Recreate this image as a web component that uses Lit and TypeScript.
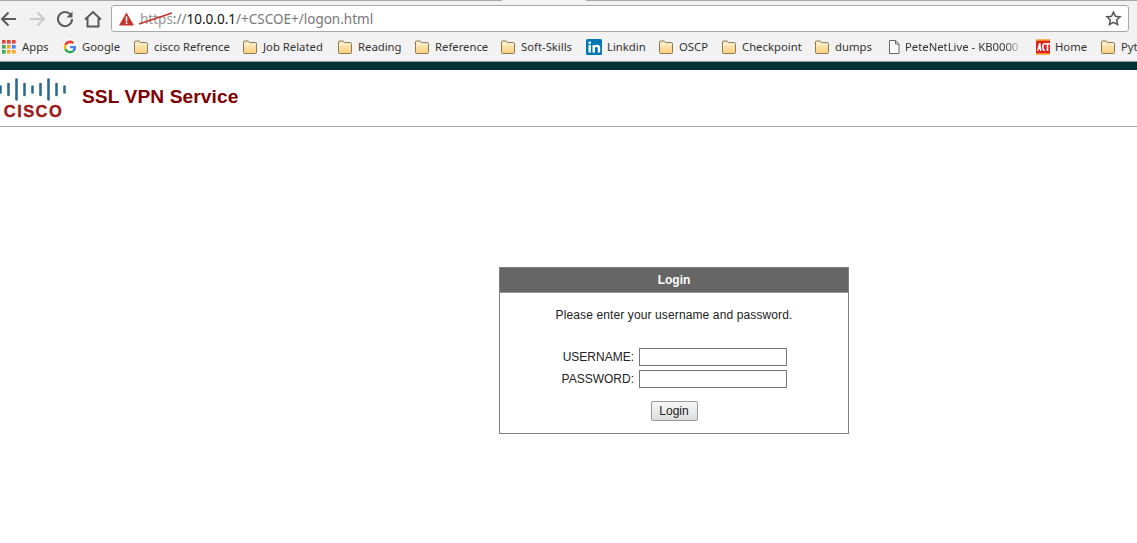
import { LitElement, html, css, svg } from "lit";
import { customElement } from "lit/decorators.js";

const folder = html`<svg class="ic" viewBox="0 0 16 16"><defs><linearGradient id="fg" x1="0" y1="0" x2="0" y2="1"><stop offset="0" stop-color="#fdeec8"/><stop offset="1" stop-color="#fbcf7e"/></linearGradient></defs><path d="M1.500 13.500V3a1 1 0 0 1 1-1h3.600l1.400 1.600h6a1 1 0 0 1 1 1v8.900a1 1 0 0 1-1 1h-11a1 1 0 0 1-1-1z" fill="url(#fg)" stroke="#8a7a55" stroke-width="1"/><path d="M2 5.500h12" stroke="#fff6df" stroke-width="1"/></svg>`;

const google = html`<svg class="ic goog" viewBox="-6 -6 60 60"><circle cx="24" cy="24" r="30" fill="#fff"/><path fill="#EA4335" d="M24 9.500c3.500 0 6.700 1.300 9.100 3.500l6.800-6.800C35.900 2.400 30.400 0 24 0 14.600 0 6.500 5.400 2.600 13.200l7.900 6.100C12.400 13.700 17.700 9.500 24 9.500z"/><path fill="#4285F4" d="M46.900 24.500c0-1.600-.1-3.100-.4-4.500H24v9h12.900c-.6 3-2.200 5.500-4.700 7.200l7.700 6c4.500-4.200 7-10.300 7-17.700z"/><path fill="#FBBC05" d="M10.500 28.700c-.5-1.400-.8-3-.8-4.700s.3-3.200.8-4.700l-7.900-6.100C.9 16.500 0 20.100 0 24s.9 7.500 2.600 10.800l7.900-6.100z"/><path fill="#34A853" d="M24 48c6.500 0 11.900-2.100 15.900-5.800l-7.700-6c-2.200 1.500-4.900 2.300-8.200 2.300-6.300 0-11.600-4.200-13.500-9.900l-7.900 6.100C6.500 42.600 14.600 48 24 48z"/></svg>`;

const linkedin = html`<svg class="ic" viewBox="0 0 16 16"><rect width="16" height="16" rx="1.500" fill="#0077b5"/><rect x="2.500" y="6" width="2.400" height="7.500" fill="#fff"/><circle cx="3.700" cy="3.800" r="1.400" fill="#fff"/><path d="M6.500 6h2.300v1.100c.5-.8 1.400-1.300 2.500-1.300 2 0 2.900 1.200 2.900 3.300v4.400h-2.400V9.500c0-1-.4-1.600-1.300-1.600s-1.600.6-1.600 1.700v3.900H6.500z" fill="#fff"/></svg>`;

const page = html`<svg class="ic" viewBox="0 0 16 16"><path d="M3.500 1.500h6l3.500 3.500v9.500H3.500z M9.500 1.500V5H13" fill="#fff" stroke="#666" stroke-width="1"/></svg>`;

const act = html`<svg class="ic" viewBox="0 0 16 16"><rect x="1" y="1" width="14" height="14" fill="#e02020"/><path d="M1 1h14M1 15h14" stroke="#f5a623" stroke-width="1.500"/><path d="M2 12l2-8h1.500l1 8H5l-.1-1.700H3.800L3.400 12z M7 8c0-3 1-4 3-4v1.500c-1 0-1.400.8-1.400 2.500s.4 2.500 1.400 2.500V12c-2 0-3-1-3-4z M10 4h5v1.500h-1.700V12h-1.600V5.500H10z" fill="#fff"/></svg>`;

const apps = html`<svg class="ic apps" viewBox="0 0 14 14">${[
  ["#e8453c", "#e8453c", "#e8453c"],
  ["#3aa757", "#f5a623", "#4285f4"],
  ["#3aa757", "#f5a623", "#f5a623"],
].flatMap((row, y) =>
  row.map((c, x) => svg`<rect x=${x * 5} y=${y * 5} width="3.600" height="3.600" fill=${c}/>`)
)}</svg>`;

interface Mark { label: string; icon: unknown; width: number; iconGap?: number; fade?: boolean; }

const marks: Mark[] = [
  { label: "Apps", icon: apps, width: 61, iconGap: 6 },
  { label: "Google", icon: google, width: 70, iconGap: 4 },
  { label: "cisco Refrence", icon: folder, width: 109 },
  { label: "Job Related", icon: folder, width: 95 },
  { label: "Reading", icon: folder, width: 77 },
  { label: "Reference", icon: folder, width: 86 },
  { label: "Soft-Skills", icon: folder, width: 86 },
  { label: "Linkdin", icon: linkedin, width: 72 },
  { label: "OSCP", icon: folder, width: 63 },
  { label: "Checkpoint", icon: folder, width: 93 },
  { label: "dumps", icon: folder, width: 72 },
  { label: "PeteNetLive - KB0000", icon: page, width: 149, iconGap: 3, fade: true },
  { label: "Home", icon: act, width: 65, iconGap: 4 },
  { label: "Pyt", icon: folder, width: 37 },
];

const ciscoBars = [7, 12, 21, 12, 7, 12, 21, 12, 7];

@customElement("app-root")
export class AppRoot extends LitElement {
  static styles = css`
    :host { display: block; width: 1137px; height: 543px; overflow: hidden; background: #fff; font-family: "Liberation Sans", Arial, sans-serif; color: #222; }
    .tabline { display: flex; height: 1px; background: #a8a8a8; }
    .tabgap { width: 84px; margin-left: 502px; background: #f2f2f2; }
    .toolbar { display: flex; align-items: flex-start; gap: 10px; height: 33px; box-sizing: border-box; background: #f2f2f2; padding: 4px 8px 0 0; }
    .nav { display: flex; width: 18px; height: 27px; align-items: center; justify-content: center; flex: none; }
    .nav.home { margin-right: -1px; }
    .nav svg { width: 20px; height: 20px; display: block; flex: none; }
    .omni { flex: 1; display: flex; align-items: center; height: 27px; box-sizing: border-box; border: 1px solid #a9a9a9; border-radius: 3px; background: #fff; padding: 0 6px 0 7px; font-family: "Noto Sans", "Open Sans", sans-serif; font-size: 13.500px; color: #777; white-space: nowrap; }
    .warn { width: 15px; height: 14px; flex: none; margin-right: 6px; }
    .scheme { position: relative; color: #999; }
    .strike { position: absolute; left: -1px; top: 0; width: 36px; height: 18px; overflow: visible; }
    .host { color: #111; }
    .path { flex: 1; }
    .star { width: 17px; height: 17px; flex: none; }
    .marks { display: flex; align-items: center; height: 28px; background: #f2f2f2; border-bottom: 1px solid #999; box-sizing: border-box; padding: 0 0 1px 2px; overflow: hidden; white-space: nowrap; font-family: "Noto Sans", "Open Sans", sans-serif; font-size: 11.300px; color: #333; }
    .mark { display: flex; align-items: center; flex: none; overflow: hidden; }
    .mark span { margin-bottom: 2px; }
    .ic { width: 16px; height: 16px; flex: none; display: block; }
    .apps { width: 14px; height: 14px; }
    .goog { margin-left: -1px; }
    .fade { width: 118px; overflow: hidden; -webkit-mask-image: linear-gradient(90deg, #000 85%, transparent); mask-image: linear-gradient(90deg, #000 85%, transparent); }
    .band { height: 8px; background: #003333; }
    .head { display: flex; align-items: center; height: 57px; box-sizing: border-box; border-bottom: 1px solid #aaa; gap: 16px; }
    .logo { width: 66px; height: 40px; flex: none; }
    .title { font-size: 19.200px; font-weight: bold; color: #800000; margin-top: -2px; letter-spacing: 0.070px; }
    .stage { padding: 140px 0 0 499px; }
    .box { width: 350px; height: 167px; box-sizing: border-box; border: 1px solid #808080; font-size: 12px; color: #222; }
    .boxhead { height: 24px; background: #666; border-bottom: 1px solid #999; color: #fff; font-weight: bold; display: flex; align-items: center; justify-content: center; }
    .msg { text-align: center; margin: 15px 0 25px; line-height: 15px; letter-spacing: 0.120px; }
    .form { display: grid; grid-template-columns: 134px 148px; column-gap: 5px; row-gap: 4px; align-items: center; }
    .form label { text-align: right; }
    .form input { width: 148px; height: 18px; box-sizing: border-box; border: 1px solid #767676; padding: 0; margin: 0; background: #fff; display: block; }
    .actions { display: flex; justify-content: center; margin-top: 13px; }
    .btn { width: 47px; height: 20px; box-sizing: border-box; padding: 0; border: 1px solid #999; border-radius: 2px; background: linear-gradient(#f6f6f6, #dedede); font: 12px "Liberation Sans", Arial, sans-serif; color: #222; }
  `;

  render() {
    return html`
      <div class="tabline"><div class="tabgap"></div></div>
      <div class="toolbar">
        <div class="nav"><svg viewBox="0 0 20 20" fill="none" stroke="#5a5a5a" stroke-width="2"><path d="M17 10H3.500M9.500 3.500L3 10l6.500 6.500"/></svg></div>
        <div class="nav"><svg viewBox="0 0 20 20" fill="none" stroke="#c9c9c9" stroke-width="2"><path d="M3 10h13.500M10.500 3.500L17 10l-6.500 6.500"/></svg></div>
        <div class="nav"><svg viewBox="0 0 20 20" fill="none" stroke="#5a5a5a" stroke-width="2"><path d="M16 6.500A7 7 0 1 0 17 10"/><path d="M17.500 2.500v6h-6z" fill="#5a5a5a" stroke="none"/></svg></div>
        <div class="nav home"><svg viewBox="0 0 20 20" fill="none" stroke="#5a5a5a" stroke-width="2"><path d="M2 10.500L10 3l8 7.500M4.500 9v8.500h11V9"/></svg></div>
        <div class="omni">
          <svg class="warn" viewBox="0 0 15 14"><path d="M7.500 0.500L15 13.500H0z" fill="#c5332b"/><path d="M6.700 4.500h1.600v5H6.700zM6.700 10.300h1.600v1.600H6.700z" fill="#fff"/></svg>
          <span class="scheme">https<svg class="strike" viewBox="0 0 36 18"><path d="M0 14L33 3" stroke="#c5332b" stroke-width="1.400" fill="none"/></svg></span><span>://</span><span class="host">10.0.0.1</span><span class="path">/+CSCOE+/logon.html</span>
          <svg class="star" viewBox="0 0 20 20" fill="none" stroke="#555" stroke-width="1.800"><path d="M10 2.500l2.300 5 5.400.6-4 3.700 1.100 5.400L10 14.500l-4.800 2.700 1.100-5.400-4-3.700 5.400-.6z"/></svg>
        </div>
      </div>
      <div class="marks">
        ${marks.map((m) => html`<div class="mark" style="width:${m.width}px;gap:${m.iconGap ?? 5}px">${m.icon}<span class=${m.fade ? "fade" : ""}>${m.label}</span></div>`)}
      </div>
      <div class="band"></div>
      <div class="head">
        <svg class="logo" viewBox="0 0 66 40">
          ${ciscoBars.map((h, i) => svg`<line x1=${0.5 + i * 8} x2=${0.5 + i * 8} y1=${11.5 - h / 2 + 0.5} y2=${11.5 + h / 2 - 0.5} stroke="#2f6b8e" stroke-width="2.600" stroke-linecap="round"/>`)}
          <text x="33.500" y="38.500" text-anchor="middle" font-family="Liberation Sans, Arial, sans-serif" font-weight="bold" font-size="16.500" letter-spacing="1.400" fill="#9b1c1c" stroke="#9b1c1c" stroke-width="0.400">CISCO</text>
        </svg>
        <div class="title">SSL VPN Service</div>
      </div>
      <div class="stage">
        <div class="box">
          <div class="boxhead">Login</div>
          <div class="msg">Please enter your username and password.</div>
          <div class="form">
            <label>USERNAME:</label><input type="text" />
            <label>PASSWORD:</label><input type="password" />
          </div>
          <div class="actions"><button class="btn">Login</button></div>
        </div>
      </div>
    `;
  }
}
